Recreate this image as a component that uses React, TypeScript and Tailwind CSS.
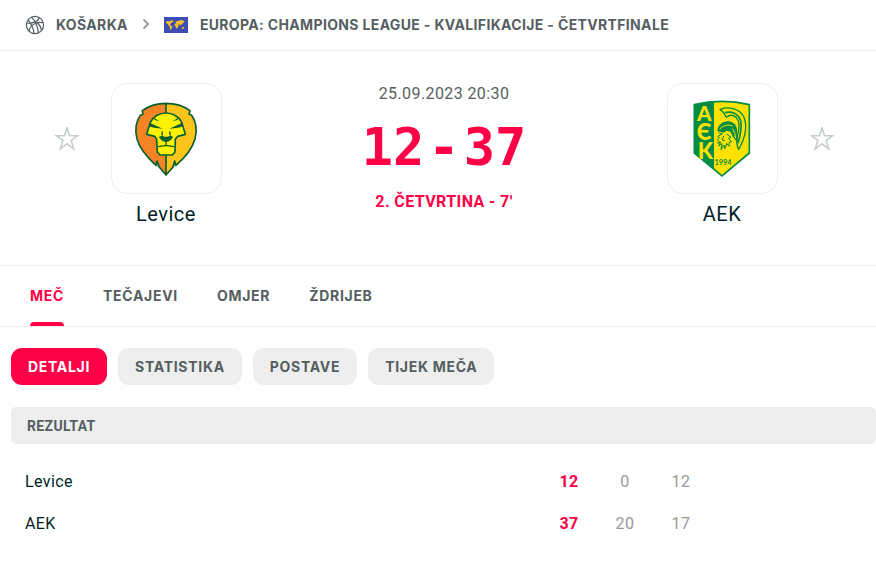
import { useState } from "react";
import type { ReactNode } from "react";

function BasketballIcon() {
  return (
    <svg viewBox="0 0 20 20" className="size-5" fill="none" stroke="#555e61" strokeWidth="1.2" aria-hidden="true">
      <circle cx="10" cy="10" r="8.6" />
      <path d="M6.6 2.2C10.2 6 12.8 11.500 13.400 17.900" />
      <path d="M1.600 8.200C7 8.600 12 7 14.600 2.900" />
      <path d="M4.200 16.300C4.600 11 9.500 6.700 18.100 7.600" />
      <path d="M3.200 5.100C6 8.500 8.300 13 9.100 18.500" />
      <path d="M12.200 7.500C14.500 9.600 16 12 16.600 15.300" />
    </svg>
  );
}

function ChevronIcon() {
  return (
    <svg viewBox="0 0 8 12" className="h-3 w-2" fill="none" stroke="#9b9fa1" strokeWidth="2" aria-hidden="true">
      <path d="M1.500 0.500L6 5L1.500 9.500" />
    </svg>
  );
}

function WorldFlag() {
  return (
    <svg viewBox="0 0 72 48" className="h-4 w-6" aria-hidden="true">
      <rect width="72" height="48" fill="#3d4db7" />
      <g fill="#fcbf1e">
        <path d="M6 15L10 12L17 13L23 10L29 11L27 15L22 17L18 22L21 26L26 29L24 33L21 36L19 40L17 37L18 31L14 26L11 20L6 19Z" />
        <path d="M34 17L38 13L44 11L52 9L62 13L60 16L57 18L54 23L51 21L49 26L46 22L43 22L44 27L41 32L38 36L36 31L32 26L32 21L36 20Z" />
        <path d="M54 31L58 29L61 34L57 36L53 34Z" />
      </g>
    </svg>
  );
}

function StarIcon() {
  return (
    <svg viewBox="0 0 24 24" className="size-6" fill="none" stroke="#c8cdcd" strokeWidth="1.600" aria-hidden="true">
      <path d="M12 0.800L14.500 8.700H22.800L16.200 13.400L18.700 21.800L12 16.800L5.300 21.800L7.800 13.400L1.200 8.700H9.500Z" />
    </svg>
  );
}

function LeviceCrest() {
  return (
    <svg viewBox="0 0 252 264" className="h-[88px] w-[84px]" aria-hidden="true">
      <path d="M126 25C100 25 74 33 55 47L57 58L49 61C36 80 32 105 39 132C48 164 76 193 96 211L99 198L106 216L126 240L147 216L152 198L156 211C177 193 204 164 213 132C220 105 216 80 203 61L195 58L198 47C179 33 152 25 126 25Z" fill="#fdc41c" />
      <path d="M126 25C100 25 74 33 55 47L57 58L49 61C36 80 32 105 39 132C48 164 76 193 96 211L99 198L106 216L126 240Z" fill="#f58426" />
      <path d="M126 25C100 25 74 33 55 47L57 58L49 61C36 80 32 105 39 132C48 164 76 193 96 211L99 198L106 216L126 240L147 216L152 198L156 211C177 193 204 164 213 132C220 105 216 80 203 61L195 58L198 47C179 33 152 25 126 25ZM126 25V240" fill="none" stroke="#0b6030" strokeWidth="5" strokeLinejoin="round" />
      <path d="M96 211L99 196L108 218L126 240L145 218L152 196L156 211L126 240Z" fill="#0b6030" opacity="0.500" />
      <path d="M126 54C106 54 87 65 79 82L68 118L92 124L98 133L100 171L108 180H145L153 171L154 133L161 124L184 118L173 82C165 65 146 54 126 54Z" fill="#fff200" stroke="#0b6030" strokeWidth="5" strokeLinejoin="round" />
      <path d="M77 83L116 101L90 98L74 94ZM175 83L136 101L163 98L178 94Z" fill="#0b6030" />
      <path d="M86 67L107 79L92 75ZM166 67L145 79L160 75ZM104 126L114 122L122 125H130L139 122L148 126L138 137L126 142L114 137Z" fill="#0b6030" />
      <path d="M126 140V152M102 155L126 151L150 155M115 109L114 122M137 109L139 122" fill="none" stroke="#0b6030" strokeWidth="4" />
    </svg>
  );
}

function AekCrest() {
  return (
    <svg viewBox="0 10 252 270" className="h-[90px] w-[84px]" aria-hidden="true">
      <path d="M43 42Q126 22 208 42V187L126 256L43 187Z" fill="#ffe200" />
      <path d="M43 42Q72 33 102 32V237L43 187Z" fill="#008c45" />
      <path d="M43 42Q126 22 208 42V187L126 256L43 187Z" fill="none" stroke="#008c45" strokeWidth="5" />
      <g fill="#ffe200" fontFamily="Lato, sans-serif" fontWeight="900" textAnchor="middle">
        <text x="73" y="92" fontSize="62">A</text>
        <text x="72" y="148" fontSize="66">Є</text>
        <text x="76" y="204" fontSize="66">K</text>
      </g>
      <text x="129" y="224" fontSize="22" fontFamily="Lato, sans-serif" fontWeight="700" textAnchor="middle" fill="#008c45">1994</text>
      <path d="M120 56C148 46 180 54 192 80C203 110 194 145 176 176C168 164 169 150 173 132C180 108 180 92 168 80C159 72 148 72 139 80C135 70 129 62 120 56Z" fill="#ffe200" stroke="#008c45" strokeWidth="4" strokeLinejoin="round" />
      <path d="M135 66C157 60 176 70 182 90C186 110 180 138 174 158" fill="none" stroke="#008c45" strokeWidth="5" />
      <path d="M112 121C112 104 128 90 147 92C163 94 173 107 171 124L173 158L158 137L151 123L140 120L130 126Z" fill="#008c45" />
      <path d="M119 115Q137 97 158 106M157 114Q166 127 167 142" fill="none" stroke="#ffe200" strokeWidth="3" />
      <path d="M116 126L127 130L113 137L119 141L112 147L117 152L113 158L122 154L116 166L126 159L123 177L132 163L135 174L140 158L147 167L148 154L155 153L145 143L153 140L140 130M131 136L126 148L135 150" fill="none" stroke="#008c45" strokeWidth="3" />
    </svg>
  );
}

function FavouriteButton({ team }: { team: string }) {
  return (
    <button type="button" aria-label={team} className="cursor-pointer">
      <StarIcon />
    </button>
  );
}

function Team({ name, crest, side }: { name: string; crest: ReactNode; side: "home" | "away" }) {
  return (
    <div>
      <div className="grid grid-cols-[1fr_auto_1fr] items-center gap-8">
        <div className="flex justify-end">{side === "home" && <FavouriteButton team={name} />}</div>
        <a href="#team" aria-label={name} className="flex size-[111px] items-center justify-center rounded-2xl border border-[#eeeeee]">
          {crest}
        </a>
        <div className="flex justify-start">{side === "away" && <FavouriteButton team={name} />}</div>
      </div>
      <a href="#team" className="mt-1.5 block text-center text-xl leading-7 tracking-wide text-[#001e28]">
        {name}
      </a>
    </div>
  );
}

const tabs = ["MEČ", "TEČAJEVI", "OMJER", "ŽDRIJEB"];
const sections = ["DETALJI", "STATISTIKA", "POSTAVE", "TIJEK MEČA"];
const rows = [
  { team: "Levice", total: 12, periods: ["0", "12", "", "", ""] },
  { team: "AEK", total: 37, periods: ["20", "17", "", "", ""] },
];

export default function App() {
  const [tab, setTab] = useState("MEČ");
  const [section, setSection] = useState("DETALJI");

  return (
    <main className="min-h-screen bg-white font-['Roboto','Liberation_Sans',sans-serif] text-[#555e61]">
      <nav className="flex h-[51px] items-center border-b border-[#eeeeee] pl-[25px] font-['Inter','Liberation_Sans',sans-serif] text-sm font-bold tracking-wide">
        <BasketballIcon />
        <a href="#sport" className="ml-[11px]">KOŠARKA</a>
        <span className="mx-3.5"><ChevronIcon /></span>
        <WorldFlag />
        <a href="#league" className="ml-3 whitespace-nowrap">
          EUROPA: CHAMPIONS LEAGUE - KVALIFIKACIJE - ČETVRTFINALE
        </a>
      </nav>

      <header className="grid grid-cols-3 border-b border-[#eeeeee] pt-8 pr-[15px] pb-[37px] pl-[27px]">
        <Team name="Levice" crest={<LeviceCrest />} side="home" />
        <div className="flex flex-col items-center">
          <time className="text-base leading-[22px] tracking-wide">25.09.2023 20:30</time>
          <div className="mt-3.5 flex gap-1 font-['DejaVu_Sans_Mono',monospace] text-[52px] leading-[56px] font-bold text-[#ff0046]">
            <span>12</span>
            <span>-</span>
            <span>37</span>
          </div>
          <div className="mt-4 text-base leading-[22px] font-bold tracking-wide text-[#ff0046]">2. ČETVRTINA - 7'</div>
        </div>
        <Team name="AEK" crest={<AekCrest />} side="away" />
      </header>

      <div role="tablist" className="flex h-[61px] gap-[39px] border-b border-[#eeeeee] pl-[30px] font-['Inter','Liberation_Sans',sans-serif]">
        {tabs.map((name) => (
          <button
            key={name}
            type="button"
            role="tab"
            aria-selected={tab === name}
            onClick={() => setTab(name)}
            className={`flex cursor-pointer flex-col items-center text-sm font-bold tracking-wider ${tab === name ? "text-[#ff0046]" : ""}`}
          >
            <span className="flex grow items-center pt-1">{name}</span>
            <span className={`h-1 w-full rounded-t-sm ${tab === name ? "bg-[#ff0046]" : ""}`} />
          </button>
        ))}
      </div>

      <div className="pl-[11px]">
        <div className="flex gap-[11px] pt-[21px] pb-[22px] font-['Inter','Liberation_Sans',sans-serif]">
          {sections.map((name) => (
            <button
              key={name}
              type="button"
              aria-pressed={section === name}
              onClick={() => setSection(name)}
              className={`h-[37px] cursor-pointer rounded-[11px] px-[17px] text-sm font-bold tracking-wider ${section === name ? "bg-[#ff0046] text-white" : "bg-[#eeeeee]"}`}
            >
              {name}
            </button>
          ))}
        </div>

        <h2 className="flex h-[37px] items-center rounded-[5px] bg-[#eeeeee] px-4 text-sm font-bold tracking-wide">REZULTAT</h2>

        <div className="-mr-px pt-[17px]">
          <table className="w-full table-fixed text-base tracking-wide">
            <tbody>
              {rows.map((row) => (
                <tr key={row.team} className="h-[42px]">
                  <th scope="row" className="pl-3.5 text-left font-normal text-[#001e28]">{row.team}</th>
                  <td className="w-14 text-center font-bold text-[#ff0046]">{row.total}</td>
                  {row.periods.map((points, index) => (
                    <td key={index} className="w-14 text-center text-[#999999]">{points}</td>
                  ))}
                </tr>
              ))}
            </tbody>
          </table>
        </div>
      </div>
    </main>
  );
}
